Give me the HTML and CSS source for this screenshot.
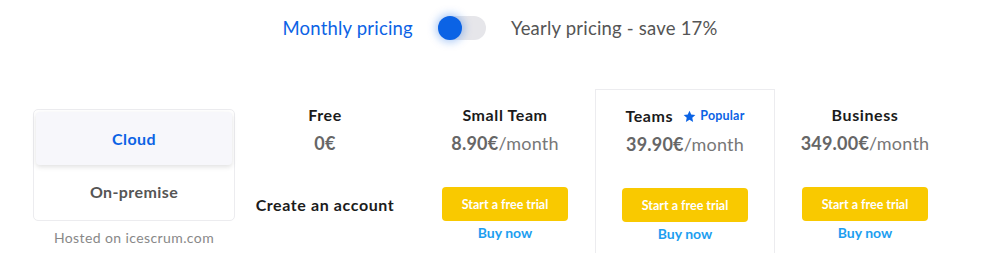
FILE: index.html
```html
<!DOCTYPE html>
<html>
  <head>
    <title>Pricing</title>
    <link rel="stylesheet" href="styles.css">
  </head>
  <body>
    <div class="period">
      <span class="period-label active">Monthly pricing</span>
      <span class="toggle"><span class="knob"></span></span>
      <span class="period-label">Yearly pricing - save 17%</span>
    </div>
    <div class="plans">
      <div class="hosting">
        <div class="hosting-box">
          <div class="hosting-tab selected">Cloud</div>
          <div class="hosting-tab">On-premise</div>
        </div>
        <div class="hosting-note">Hosted on icescrum.com</div>
      </div>
      <div class="plan">
        <div class="plan-name">Free</div>
        <div class="plan-price"><b>0€</b></div>
        <div class="plan-action">Create an account</div>
      </div>
      <div class="plan">
        <div class="plan-name">Small Team</div>
        <div class="plan-price"><b>8.90€</b>/month</div>
        <button class="trial">Start a free trial</button>
        <a class="buy" href="#">Buy now</a>
      </div>
      <div class="plan popular">
        <div class="plan-name">Teams
          <span class="badge">
            <svg width="13" height="13" viewBox="0 0 24 24"><path d="M12 1.5l3.2 7 7.6.8-5.7 5.2 1.6 7.5L12 18.1 5.3 22l1.6-7.5L1.2 9.3l7.6-.8z" fill="#0b63e5"/></svg>
            Popular
          </span>
        </div>
        <div class="plan-price"><b>39.90€</b>/month</div>
        <button class="trial">Start a free trial</button>
        <a class="buy" href="#">Buy now</a>
      </div>
      <div class="plan">
        <div class="plan-name">Business</div>
        <div class="plan-price"><b>349.00€</b>/month</div>
        <button class="trial">Start a free trial</button>
        <a class="buy" href="#">Buy now</a>
      </div>
    </div>
  </body>
</html>
```

FILE: styles.css
```css
body{
  margin: 0;
  font-family: Lato, "Open Sans", sans-serif;
  color: #1b1b1b;
  background-color: white;
  overflow: hidden;
}

.period{
  display: flex;
  justify-content: center;
  align-items: center;
  column-gap: 25px;
  padding-top: 15px;
  height: 26px;
}

.period-label{
  font-size: 18.5px;
  letter-spacing: .2px;
  color: #555;
}

.period-label.active{
  color: #0b63e5;
}

.toggle{
  position: relative;
  display: inline-block;
  width: 48px;
  height: 24px;
  border-radius: 12px;
  background-color: #e6e6ea;
}

.knob{
  position: absolute;
  left: 0;
  top: 0;
  width: 24px;
  height: 24px;
  border-radius: 50%;
  background-color: #0b63e5;
  box-shadow: 0 0 8px 2px rgba(11, 99, 229, .35);
}

.plans{
  display: flex;
  padding-left: 33px;
  margin-top: 48px;
}

.hosting{
  width: 202px;
  padding-top: 20px;
}

.hosting-box{
  border: 1px solid #ececef;
  border-radius: 5px;
  padding: 2px;
  height: 106px;
}

.hosting-tab{
  height: 53px;
  display: flex;
  justify-content: center;
  align-items: center;
  font-size: 16px;
  letter-spacing: .4px;
  font-weight: bold;
  color: #555;
}

.hosting-tab.selected{
  background-color: #f7f7fb;
  color: #0b63e5;
  border-radius: 4px;
  box-shadow: 0 2px 5px rgba(0, 0, 0, .12);
}

.hosting-note{
  margin-top: 8px;
  text-align: center;
  font-size: 14px;
  letter-spacing: .4px;
  color: #888;
}

.plan{
  width: 180px;
  height: 180px;
  display: flex;
  flex-direction: column;
  align-items: center;
  padding-top: 16px;
  box-sizing: border-box;
}

.plan.popular{
  border: 1px solid #ececef;
  border-bottom: none;
}

.plan-name{
  font-size: 16px;
  letter-spacing: .6px;
  font-weight: bold;
  line-height: 20px;
  display: flex;
  align-items: center;
}

.badge{
  display: inline-flex;
  align-items: center;
  column-gap: 4px;
  margin-left: 10px;
  font-size: 12.5px;
  letter-spacing: .2px;
  color: #0b63e5;
}

.plan-price{
  margin-top: 8px;
  font-size: 18px;
  letter-spacing: .2px;
  line-height: 20px;
  color: #777;
}

.plan-price b{
  color: #666;
}

.plan-action{
  margin-top: 34px;
  height: 34px;
  display: flex;
  align-items: center;
  font-size: 16px;
  letter-spacing: .6px;
  font-weight: bold;
}

.trial{
  margin-top: 34px;
  width: 126px;
  height: 34px;
  border: none;
  border-radius: 4px;
  background-color: #f9c900;
  color: white;
  font-family: inherit;
  font-size: 12.5px;
  font-weight: bold;
}

.buy{
  margin-top: 3px;
  font-size: 14px;
  line-height: 18px;
  font-weight: bold;
  color: #1e9ef0;
  text-decoration: none;
}
```
